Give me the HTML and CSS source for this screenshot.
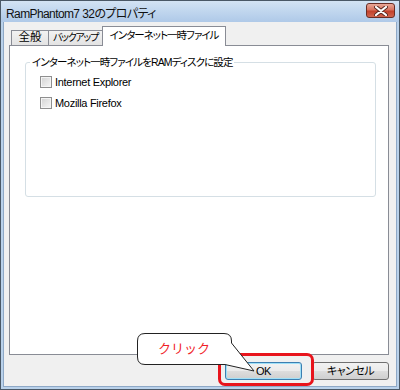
FILE: index.html
```html
<!DOCTYPE html>
<html lang="ja">
<head>
  <meta charset="UTF-8" />
  <title>RamPhantom7 32のプロパティ</title>
  <link rel="stylesheet" href="styles.css">
</head>
<body>
  <div class="window">
    <div class="titlebar">
      <span class="title">RamPhantom7 32のプロパティ</span>
      <div class="close">
        <svg width="14" height="10" viewBox="0 0 14 10">
          <path d="M2,1 L12,9 M12,1 L2,9" stroke="#5a2a22" stroke-width="4" stroke-linecap="round"/>
          <path d="M2,1 L12,9 M12,1 L2,9" stroke="#ffffff" stroke-width="2.2" stroke-linecap="round"/>
        </svg>
      </div>
    </div>

    <div class="client">
      <div class="tabs">
        <div class="tab general">全般</div>
        <div class="tab backup">バックアップ</div>
        <div class="tab active">インターネット一時ファイル</div>
      </div>

      <div class="panel">
        <fieldset class="group">
          <legend>インターネット一時ファイルをRAMディスクに設定</legend>
          <label class="check"><span class="box"></span>Internet Explorer</label>
          <label class="check"><span class="box"></span>Mozilla Firefox</label>
        </fieldset>
      </div>

      <div class="buttons">
        <div class="btn default">OK</div>
        <div class="btn">キャンセル</div>
      </div>
    </div>

    <!-- 注釈 -->
    <div class="highlight"></div>
    <div class="callout">
      <svg width="125" height="45" viewBox="0 0 125 45">
        <path d="M10,3.5 H89 Q96.5,3.5 96.5,11 V13 L119,41 L90,34.5 H10 Q2.5,34.5 2.5,27 V11 Q2.5,3.5 10,3.5 Z"
              fill="#ffffff" stroke="#222" stroke-width="1"/>
      </svg>
      <span class="callout-text">クリック</span>
    </div>
  </div>
</body>
</html>
```

FILE: styles.css
```css
* {
  margin: 0;
  padding: 0;
  box-sizing: border-box;
}
body {
  font-family: "Liberation Sans", "Noto Sans CJK JP", sans-serif;
  font-size: 12px;
  color: #000;
  background: #ffffff;
}

.window {
  position: relative;
  width: 400px;
  height: 390px;
  border: 1px solid #4a5866;
  background: #b9d1ea;
  padding: 0 2px 2px 2px;
  display: flex;
  flex-direction: column;
}

/* タイトルバー */
.titlebar {
  height: 22px;
  display: flex;
  align-items: center;
  padding-left: 5px;
  background: linear-gradient(to bottom, #d3e3f3 0%, #c0d6ee 50%, #afc9e8 100%);
  margin: 0 -2px;
}
.title {
  font-size: 12px;
  color: #111;
  margin-right: auto;
  font-feature-settings: "palt";
  letter-spacing: -0.6px;
  padding-top: 1px;
}
.close {
  width: 29px;
  height: 15px;
  margin-right: 4px;
  margin-top: -2px;
  border: 1px solid #6a2d24;
  border-radius: 3px;
  background: linear-gradient(to bottom, #e8a898 0%, #d8735f 45%, #c2412b 55%, #d0654f 100%);
  display: flex;
  align-items: center;
  justify-content: center;
}

/* 本体 */
.client {
  flex: 1;
  background: #f0f0f0;
  border: 1px solid #8ea8c6;
  border-top: none;
  padding: 5px 7px 6px 5px;
  display: flex;
  flex-direction: column;
}

.tabs {
  height: 18px;
  display: flex;
  align-items: flex-end;
  padding-left: 2px;
  position: relative;
  z-index: 1;
}
.tab {
  height: 15px;
  line-height: 13px;
  border: 1px solid #898c95;
  border-bottom: none;
  margin-right: -1px;
  background: linear-gradient(to bottom, #f2f2f2, #e3e3e3);
  font-size: 10.5px;
  font-feature-settings: "palt";
  letter-spacing: -1px;
  text-align: center;
  white-space: nowrap;
  overflow: hidden;
}
.tab.general {
  width: 38px;
  font-size: 11.5px;
  letter-spacing: 0;
}
.tab.backup {
  width: 56px;
  font-size: 10px;
  letter-spacing: -1.3px;
  padding-right: 1px;
}
.tab.active {
  width: 124px;
  height: 20px;
  line-height: 17px;
  margin-bottom: -1px;
  margin-left: -1px;
  background: #ffffff;
}

.panel {
  height: 310px;
  background: #ffffff;
  border: 1px solid #898c95;
  padding: 9px 12px 0 15px;
}

.group {
  height: 142px;
  border: 1px solid #d5dfe5;
  border-radius: 3px;
  padding: 0 4px;
}
.group legend {
  padding: 0 2px;
  line-height: 14px;
  font-size: 10.5px;
  font-feature-settings: "palt";
  letter-spacing: -0.9px;
}
.check {
  display: flex;
  align-items: center;
  height: 12px;
  margin: 7px 0 9px 10px;
  font-size: 11px;
  letter-spacing: -0.3px;
}
.check + .check {
  margin-top: 0;
}
.box {
  width: 12px;
  height: 12px;
  border: 1px solid #8f8f8f;
  background: linear-gradient(135deg, #d2d2d2, #f6f6f6);
  box-shadow: inset 0 0 0 1px #f4f4f4;
  margin-right: 3px;
}

.buttons {
  margin-top: 7px;
  display: flex;
  justify-content: flex-end;
  gap: 10px;
}
.btn {
  width: 77px;
  height: 18px;
  border: 1px solid #707070;
  border-radius: 3px;
  background: linear-gradient(to bottom, #f2f2f2 0%, #ebebeb 48%, #dddddd 52%, #cfcfcf 100%);
  text-align: center;
  line-height: 16px;
  font-size: 11px;
  font-feature-settings: "palt";
  letter-spacing: -0.5px;
}
.btn.default {
  border-color: #3c7fb1;
  box-shadow: inset 0 0 0 1px #9fe0f8;
}

/* 注釈 */
.highlight {
  position: absolute;
  left: 217px;
  top: 352px;
  width: 96px;
  height: 33px;
  border: 3px solid #e8141c;
  border-radius: 7px;
}
.callout {
  position: absolute;
  left: 134px;
  top: 329px;
  width: 125px;
  height: 45px;
}
.callout svg {
  display: block;
}
.callout-text {
  position: absolute;
  left: 3px;
  top: 10px;
  width: 92px;
  text-align: center;
  color: #f01e28;
  font-size: 13px;
  line-height: 16px;
  font-family: "Noto Sans CJK JP", sans-serif;
}
```
